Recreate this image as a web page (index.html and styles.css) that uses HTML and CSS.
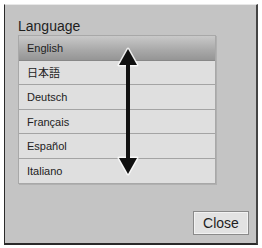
FILE: index.html
```html
<!DOCTYPE html>
<html>
<head>
<meta charset="utf-8">
<link rel="stylesheet" href="styles.css">
</head>
<body>
<div class="panel">
  <div class="title">Language</div>
  <div class="list">
    <div class="row selected">English</div>
    <div class="row">日本語</div>
    <div class="row">Deutsch</div>
    <div class="row">Français</div>
    <div class="row">Español</div>
    <div class="row">Italiano</div>
    <svg class="arrow" width="24" height="130" viewBox="0 0 24 130">
      <g stroke="#ffffff" stroke-width="3" stroke-linejoin="round" opacity="0.8">
        <polygon points="12,2 3,18 21,18"/>
        <polygon points="12,127 3,111 21,111"/>
      </g>
      <rect x="10" y="14" width="4" height="100" fill="#111"/>
      <polygon points="12,2 3,18 21,18" fill="#111"/>
      <polygon points="12,127 3,111 21,111" fill="#111"/>
    </svg>
  </div>
  <div class="footer">
    <button class="close">Close</button>
  </div>
</div>
</body>
</html>
```
FILE: styles.css
```css
html, body {
  margin: 0;
  padding: 0;
  background: #ffffff;
}
body {
  font-family: "Liberation Sans", Arial, sans-serif;
}
.panel {
  box-sizing: border-box;
  margin: 4px 0 0 4px;
  width: 254px;
  height: 241px;
  background: #c4c4c4;
  border-left: 1px solid #2a2a2a;
  border-right: 2px solid #444;
  border-bottom: 2px solid #2a2a2a;
  border-top: 1px solid #e8e8e8;
  padding: 12px 0 0 13px;
  display: flex;
  flex-direction: column;
}
.title {
  font-size: 14px;
  line-height: 18px;
  color: #1e1e1e;
  height: 18px;
}
.list {
  position: relative;
  width: 196px;
  border: 1px solid #a8a8a8;
  box-shadow: 1px 1px 0 #b0b0b0;
  background: #dedede;
}
.row {
  height: 23.6px;
  line-height: 24px;
  padding-left: 8px;
  font-size: 11px;
  color: #222;
  border-bottom: 1px solid #a4a4a4;
  background: #dfdfdf;
  font-family: "Liberation Sans", "Noto Sans CJK JP", sans-serif;
}
.row:last-of-type {
  border-bottom: none;
}
.row.selected {
  background: linear-gradient(to bottom, #c9c9c9 0%, #a8a8a8 60%, #959595 100%);
  border-bottom: 1px solid #888;
}
.arrow {
  position: absolute;
  left: 97px;
  top: 11px;
}
.footer {
  margin-top: auto;
  display: flex;
  justify-content: flex-end;
  padding: 0 7px 8px 0;
}
.close {
  width: 56px;
  height: 24px;
  background: #e2e2e2;
  border: 1px solid #8a8a8a;
  box-shadow: inset 0 0 0 1px #f2f2f2;
  font-family: "Liberation Sans", Arial, sans-serif;
  font-size: 14px;
  color: #1e1e1e;
  padding: 0;
  border-radius: 0;
}
```
